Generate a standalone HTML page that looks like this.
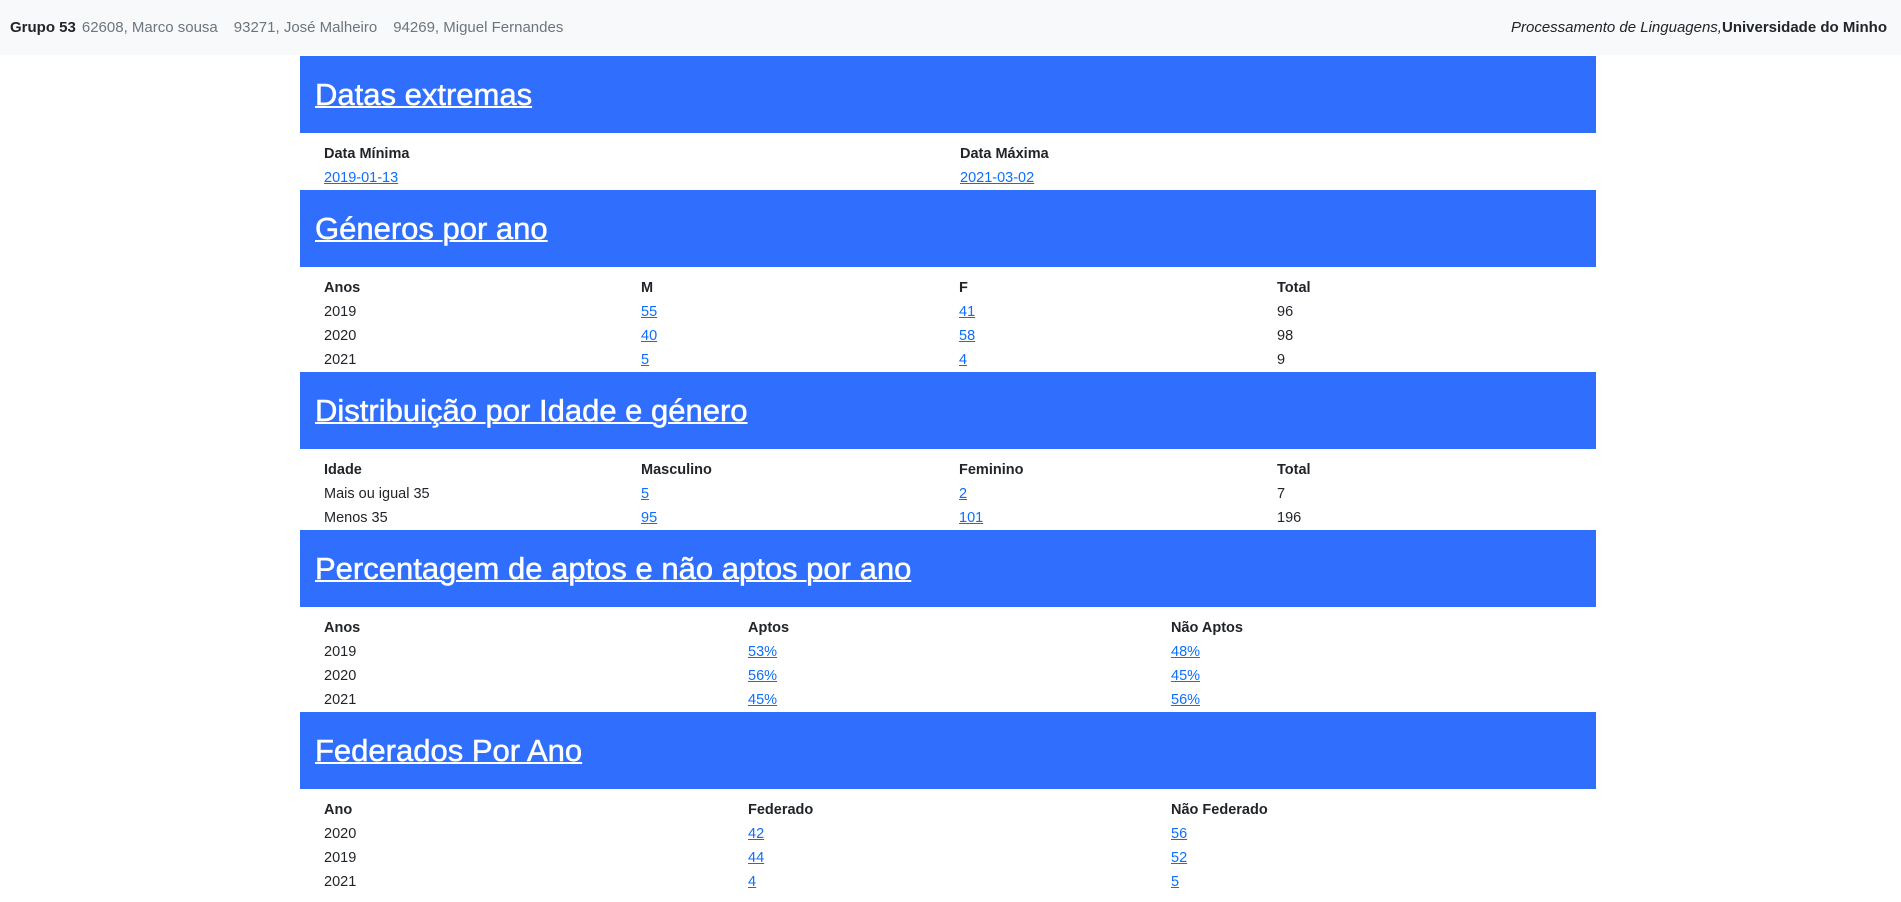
<!DOCTYPE html>
<html><head><meta charset="utf-8"><style>
*{margin:0;padding:0;box-sizing:border-box}
body{width:1901px;height:902px;overflow:hidden;background:#fff;font-family:"Liberation Sans",sans-serif;font-size:14.5px;color:#212529}
.top{height:55px;background:#f8f9fa;display:flex;align-items:center;justify-content:space-between;padding:0 14px 0 10px;font-size:15px}
.top .l b{color:#212529;margin-right:6px}
.top .l span{color:#6c757d;margin-right:16px}
.top .r i{color:#212529}
.wrap{position:absolute;left:300px;top:56px;width:1296px}
.h{height:77px;background:#306ffe;color:#fff;font-size:31px;padding-left:15px;display:flex;align-items:center}
.h a{color:#fff;text-decoration:underline;text-decoration-thickness:2px;-webkit-text-stroke:0.5px #fff}
table{width:100%;border-collapse:collapse;margin-top:9px;line-height:24px}
td,th{text-align:left;padding:0 0 0 24px;font-weight:normal;vertical-align:middle}
th{font-weight:bold}
a{color:#0d6efd}
</style></head><body>
<div class="top"><div class="l"><b>Grupo 53</b><span>62608, Marco sousa</span><span>93271, José Malheiro</span><span>94269, Miguel Fernandes</span></div><div class="r"><i>Processamento de Linguagens,</i><b>Universidade do Minho</b></div></div>
<div class="wrap">
<div class="h"><a>Datas extremas</a></div>
<table><colgroup><col style="width:636px"><col></colgroup>
<tr><th>Data Mínima</th><th>Data Máxima</th></tr>
<tr><td><a href="#">2019-01-13</a></td><td><a href="#">2021-03-02</a></td></tr></table>
<div class="h"><a>Géneros por ano</a></div>
<table><colgroup><col style="width:317px"><col style="width:318px"><col style="width:318px"><col></colgroup>
<tr><th>Anos</th><th>M</th><th>F</th><th>Total</th></tr>
<tr><td>2019</td><td><a href="#">55</a></td><td><a href="#">41</a></td><td>96</td></tr>
<tr><td>2020</td><td><a href="#">40</a></td><td><a href="#">58</a></td><td>98</td></tr>
<tr><td>2021</td><td><a href="#">5</a></td><td><a href="#">4</a></td><td>9</td></tr></table>
<div class="h"><a>Distribuição por Idade e género</a></div>
<table><colgroup><col style="width:317px"><col style="width:318px"><col style="width:318px"><col></colgroup>
<tr><th>Idade</th><th>Masculino</th><th>Feminino</th><th>Total</th></tr>
<tr><td>Mais ou igual 35</td><td><a href="#">5</a></td><td><a href="#">2</a></td><td>7</td></tr>
<tr><td>Menos 35</td><td><a href="#">95</a></td><td><a href="#">101</a></td><td>196</td></tr></table>
<div class="h"><a>Percentagem de aptos e não aptos por ano</a></div>
<table><colgroup><col style="width:424px"><col style="width:423px"><col></colgroup>
<tr><th>Anos</th><th>Aptos</th><th>Não Aptos</th></tr>
<tr><td>2019</td><td><a href="#">53%</a></td><td><a href="#">48%</a></td></tr>
<tr><td>2020</td><td><a href="#">56%</a></td><td><a href="#">45%</a></td></tr>
<tr><td>2021</td><td><a href="#">45%</a></td><td><a href="#">56%</a></td></tr></table>
<div class="h"><a>Federados Por Ano</a></div>
<table><colgroup><col style="width:424px"><col style="width:423px"><col></colgroup>
<tr><th>Ano</th><th>Federado</th><th>Não Federado</th></tr>
<tr><td>2020</td><td><a href="#">42</a></td><td><a href="#">56</a></td></tr>
<tr><td>2019</td><td><a href="#">44</a></td><td><a href="#">52</a></td></tr>
<tr><td>2021</td><td><a href="#">4</a></td><td><a href="#">5</a></td></tr></table>
</div>
</body></html>
